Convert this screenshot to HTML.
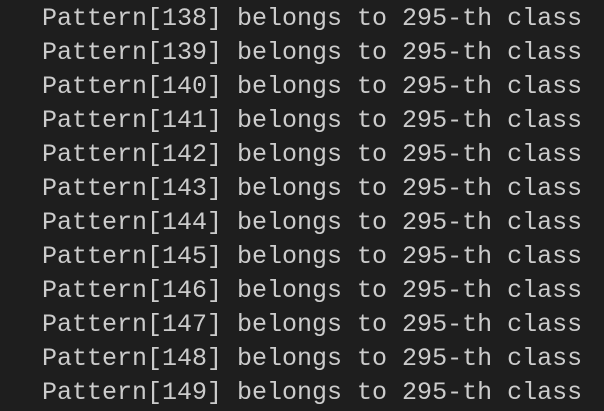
<!DOCTYPE html>
<html><head><style>
html,body{margin:0;padding:0;background:#1e1e1e;width:604px;height:411px;overflow:hidden}
pre{margin:0;padding:2px 0 0 42px;font-family:"Liberation Mono",monospace;font-size:25px;line-height:34px;color:#cccccc}
</style></head><body><pre>Pattern[138] belongs to 295-th class
Pattern[139] belongs to 295-th class
Pattern[140] belongs to 295-th class
Pattern[141] belongs to 295-th class
Pattern[142] belongs to 295-th class
Pattern[143] belongs to 295-th class
Pattern[144] belongs to 295-th class
Pattern[145] belongs to 295-th class
Pattern[146] belongs to 295-th class
Pattern[147] belongs to 295-th class
Pattern[148] belongs to 295-th class
Pattern[149] belongs to 295-th class</pre></body></html>
